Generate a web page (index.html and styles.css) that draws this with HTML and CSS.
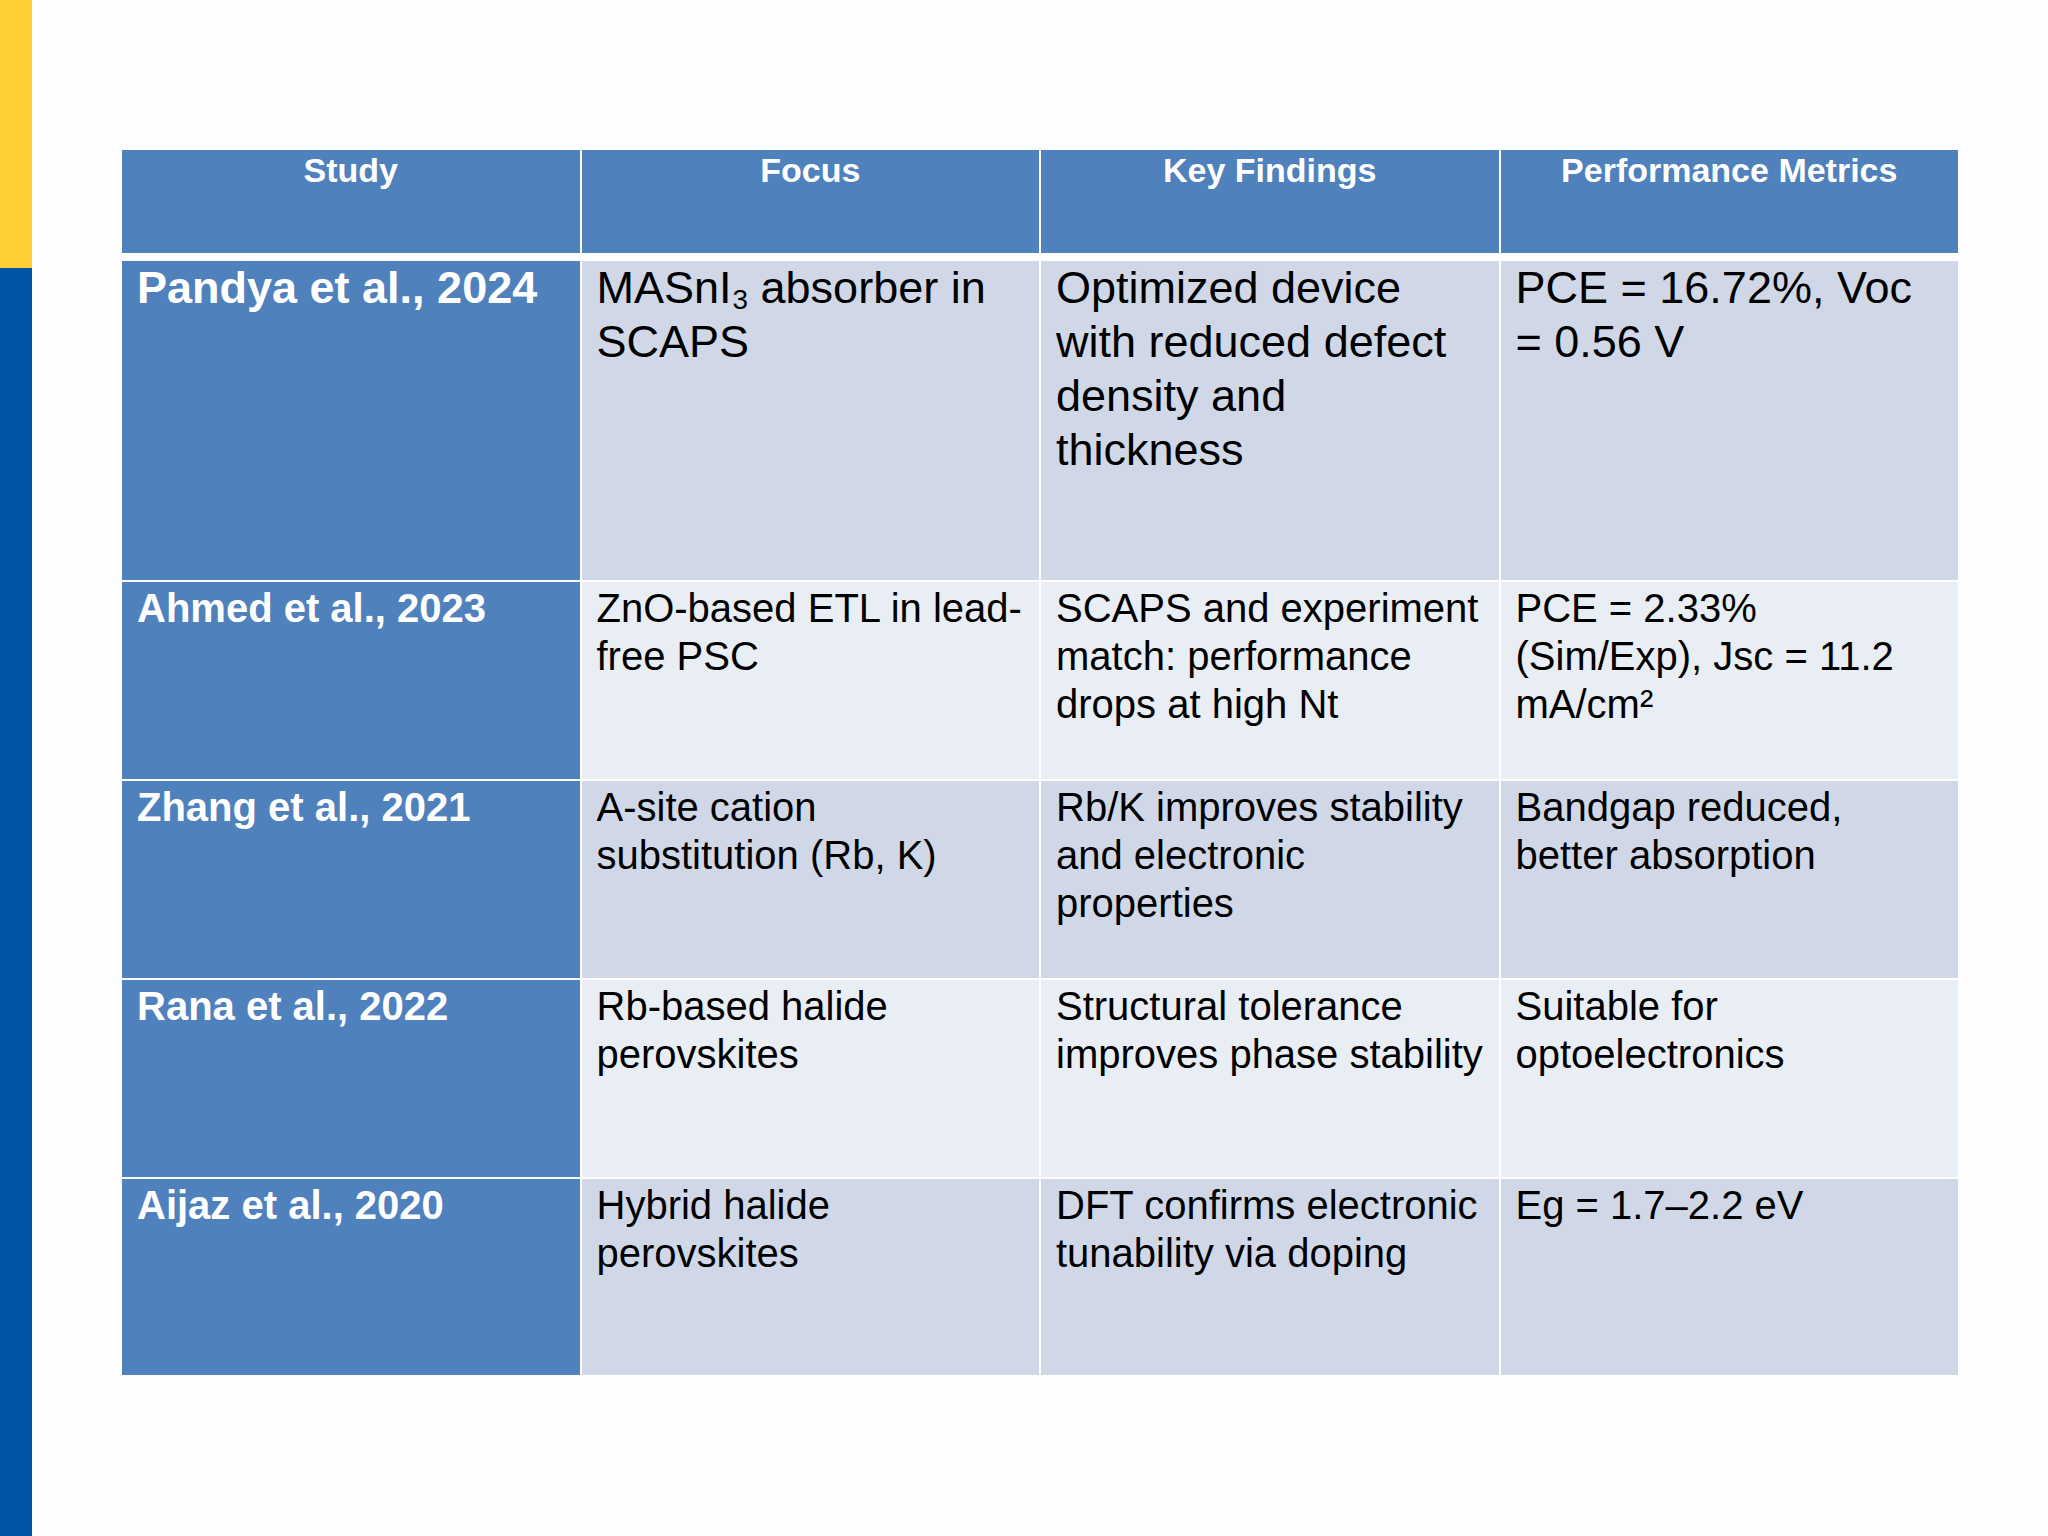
FILE: index.html
```html
<!DOCTYPE html>
<html lang="en">
<head>
<meta charset="utf-8">
<title>Literature comparison</title>
<link rel="stylesheet" href="styles.css">
</head>
<body>
<div class="slide">
  <div class="side-bar">
    <div class="bar-yellow"></div>
    <div class="bar-blue"></div>
  </div>
  <main class="content">
    <div class="table">
      <div class="thead">
        <div class="th">Study</div>
        <div class="th">Focus</div>
        <div class="th">Key Findings</div>
        <div class="th">Performance Metrics</div>
      </div>
      <div class="tbody">
        <div class="tr tr-first band1">
          <div class="td study">Pandya et al., 2024</div>
          <div class="td">MASnI<span class="sub">3</span> absorber in SCAPS</div>
          <div class="td">Optimized device with reduced defect density and thickness</div>
          <div class="td">PCE = 16.72%, Voc = 0.56 V</div>
        </div>
        <div class="tr band2">
          <div class="td study">Ahmed et al., 2023</div>
          <div class="td">ZnO-based ETL in lead-free PSC</div>
          <div class="td">SCAPS and experiment match: performance drops at high Nt</div>
          <div class="td">PCE = 2.33% (Sim/Exp), Jsc = 11.2 mA/cm²</div>
        </div>
        <div class="tr band1">
          <div class="td study">Zhang et al., 2021</div>
          <div class="td">A-site cation substitution (Rb, K)</div>
          <div class="td">Rb/K improves stability and electronic properties</div>
          <div class="td">Bandgap reduced, better absorption</div>
        </div>
        <div class="tr band2">
          <div class="td study">Rana et al., 2022</div>
          <div class="td">Rb-based halide perovskites</div>
          <div class="td">Structural tolerance improves phase stability</div>
          <div class="td">Suitable for optoelectronics</div>
        </div>
        <div class="tr band1 tr-last">
          <div class="td study">Aijaz et al., 2020</div>
          <div class="td">Hybrid halide perovskites</div>
          <div class="td">DFT confirms electronic tunability via doping</div>
          <div class="td">Eg = 1.7–2.2 eV</div>
        </div>
      </div>
    </div>
  </main>
</div>
</body>
</html>
```

FILE: styles.css
```css
* {
  box-sizing: border-box;
}

html, body {
  margin: 0;
  padding: 0;
  background: #fefefe;
}

body {
  font-family: "Liberation Sans", Arial, sans-serif;
  color: #000;
}

.slide {
  display: flex;
  width: 2048px;
  height: 1536px;
  overflow: hidden;
}

.side-bar {
  width: 32px;
  flex: none;
  display: flex;
  flex-direction: column;
}

.bar-yellow {
  height: 268px;
  background: #ffcd34;
}

.bar-blue {
  flex: 1;
  background: #0053a6;
}

.content {
  flex: 1;
  padding: 150px 0 0 90px;
}

.table {
  width: 1836px;
  display: flex;
  flex-direction: column;
}

.thead,
.tr {
  display: grid;
  grid-template-columns: repeat(4, 1fr);
  column-gap: 2px;
}

.thead {
  height: 103px;
  margin-bottom: 8px;
}

.th {
  background: #4f81bd;
  color: #fff;
  font-weight: bold;
  font-size: 34px;
  line-height: 1.2;
  text-align: center;
  padding: 0 8px;
}

.tbody {
  display: flex;
  flex-direction: column;
  row-gap: 2px;
}

.tr {
  height: 197px;
}

.tr-first {
  height: 319px;
}

.tr-last {
  height: 196px;
}

.td {
  font-size: 40px;
  line-height: 48px;
  padding: 2px 10px 0 15px;
}

.tr-first .td {
  font-size: 45px;
  line-height: 54px;
  padding: 0 28px 0 15px;
}

.band1 .td {
  background: #d0d8e8;
}

.band2 .td {
  background: #e9edf4;
}

.tr .td.study {
  background: #4f81bd;
  color: #fff;
  font-weight: bold;
}

.sub {
  display: inline-block;
  font-size: 0.62em;
  line-height: 1;
  vertical-align: -0.2em;
  margin-left: 1px;
}
```
